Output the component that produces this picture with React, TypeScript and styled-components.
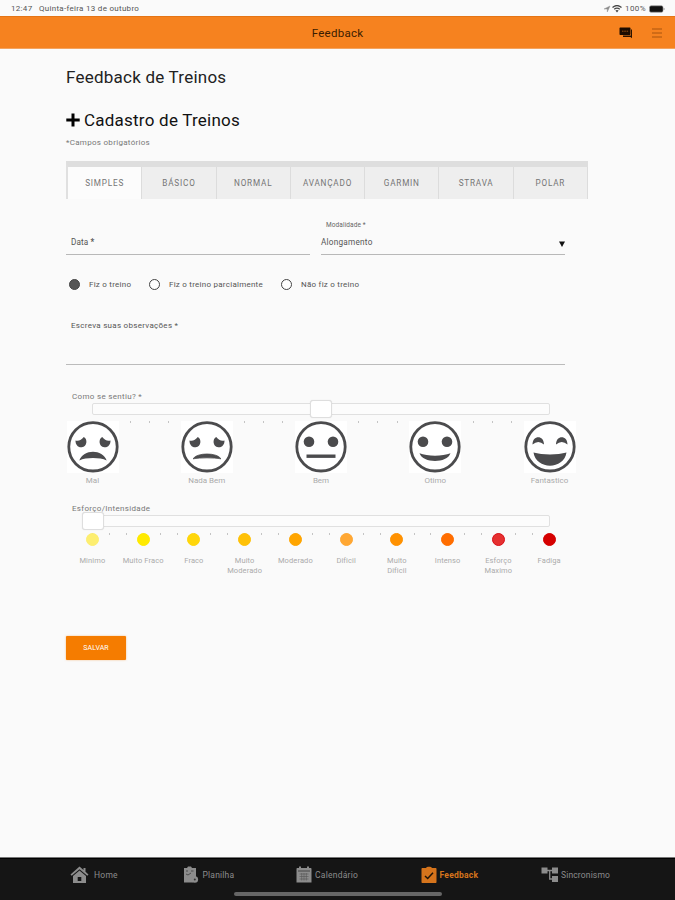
import React, { ReactNode, useState } from "react";
import styled, { createGlobalStyle } from "styled-components";

const GlobalStyle = createGlobalStyle`
  * {
    box-sizing: border-box;
  }
  body {
    margin: 0;
    background: #fafafa;
    font-family: Roboto, "Liberation Sans", sans-serif;
  }
  h1, h2, p {
    margin: 0;
    font-weight: 400;
  }
  button {
    font-family: inherit;
    padding: 0;
    border: 0;
  }
  svg {
    display: block;
    flex: none;
  }
`;

const tabs = ["SIMPLES", "BÁSICO", "NORMAL", "AVANÇADO", "GARMIN", "STRAVA", "POLAR"];

const answers = [
  { label: "Fiz o treino", width: 80 },
  { label: "Fiz o treino parcialmente", width: 132 },
  { label: "Não fiz o treino", width: 90 },
];

const feelings = ["Mal", "Nada Bem", "Bem", "Otimo", "Fantastico"];

const efforts = [
  { label: "Minimo", color: "#fdee70" },
  { label: "Muito Fraco", color: "#ffea00" },
  { label: "Fraco", color: "#ffd60a" },
  { label: "Muito\nModerado", color: "#ffc107" },
  { label: "Moderado", color: "#ffa500" },
  { label: "Dificil", color: "#ffa733" },
  { label: "Muito\nDificil", color: "#ff9100" },
  { label: "Intenso", color: "#ff6d00" },
  { label: "Esforço\nMaximo", color: "#e53030", ring: "#d90d16" },
  { label: "Fadiga", color: "#d50000" },
];

const SadEyes = () => (
  <>
    <path d="M8.500 19.500c3 1 6-.5 8.300-3.500 4 2 3.500 9.500-2 10.300-3.700.500-6.500-2.800-6.300-6.800z" />
    <path d="M43.500 19.500c-3 1-6-.5-8.300-3.500-4 2-3.500 9.500 2 10.300 3.700.500 6.500-2.800 6.300-6.800z" />
  </>
);

const RoundEyes = () => (
  <>
    <circle cx="14" cy="20.700" r="5.300" />
    <circle cx="38" cy="20.700" r="5.300" />
  </>
);

const Face: React.FC<{ mood: number }> = ({ mood }) => (
  <svg width="52" height="52" viewBox="0 0 52 52" fill="#4b4b4d">
    <circle cx="26" cy="25.800" r="24.2" fill="#fff" stroke="#4b4b4d" strokeWidth="2.8" />
    {mood === 0 && (
      <>
        <SadEyes />
        <path d="M12.300 39.500c4-11.800 23.400-11.800 27.400 0-7-3.200-20.400-3.200-27.400 0z" />
      </>
    )}
    {mood === 1 && (
      <>
        <SadEyes />
        <path d="M12 37.800c4-6.400 24-6.400 28 0-8-1.300-20-1.300-28 0z" stroke="#4b4b4d" strokeWidth=".8" />
      </>
    )}
    {mood === 2 && (
      <>
        <RoundEyes />
        <path d="M11.500 33.500h29v3.400h-29z" />
      </>
    )}
    {mood === 3 && (
      <>
        <RoundEyes />
        <path d="M10.500 32.200c8 3.300 23 3.300 31 0-3.500 10.300-27.500 10.300-31 0z" />
      </>
    )}
    {mood === 4 && (
      <>
        <path d="M8.500 23.500c0-9.800 11.500-9.800 11.500 0q-5.700-5-11.500 0z" />
        <path d="M32 23.500c0-9.800 11.500-9.800 11.500 0q-5.700-5-11.500 0z" />
        <path d="M9.500 31.500c9 2.500 24 2.500 33 0-2.500 17.500-30.500 17.500-33 0z" />
      </>
    )}
  </svg>
);

const HomeIcon = () => (
  <svg width="19" height="18" viewBox="0 0 19 18" fill="currentColor">
    <path d="M9.500.5.500 8.500l1.200 1.300 7.800-6.600 7.800 6.600 1.200-1.300-3-2.700V2h-2v2z" />
    <path d="M3 10 9.500 4.400 16 10v7H3z" />
    <path d="M7.700 11h3.600v4H7.700z" fill="#151515" />
  </svg>
);

const SheetIcon = () => (
  <svg width="16" height="18" viewBox="0 0 16 18" fill="currentColor">
    <path d="M1 2h3l1-1.500h3L9 2h4v10l-3 4.500H1z" />
    <path d="M3 5h2M8 5h2.500M3 8l2 1 3-2" fill="none" stroke="#3c3c3c" strokeWidth=".8" />
    <circle cx="11.800" cy="13.500" r="3.300" />
    <circle cx="11.800" cy="13.500" r="1" fill="#333" />
  </svg>
);

const CalendarIcon = () => (
  <svg width="16" height="18" viewBox="0 0 16 18" fill="currentColor">
    <path d="M1.500 2H3V.5h2V2h6V.5h2V2h1.500c.6 0 1 .4 1 1v13.500H.5V3c0-.6.400-1 1-1z" />
    <path d="M2 5h12" stroke="#343434" strokeWidth=".8" />
    <path d="M3.500 8h9M3.500 10.500h9M3.500 13h9M5.700 7v7.500M8 7v7.500M10.300 7v7.500" stroke="#555" strokeWidth=".6" />
  </svg>
);

const CheckIcon = () => (
  <svg width="16" height="18" viewBox="0 0 16 18" fill="currentColor">
    <path d="M1.500 2H5c.500-1.800 5.500-1.800 6 0h3.500c.6 0 1 .4 1 1v13c0 .6-.4 1-1 1h-13c-.6 0-1-.4-1-1V3c0-.6.400-1 1-1z" />
    <path d="m4 10 2.700 2.500L12 6.800" fill="none" stroke="#201508" strokeWidth="1.500" />
  </svg>
);

const TreeIcon = () => (
  <svg width="18" height="18" viewBox="0 0 18 18" fill="currentColor">
    <path d="M.5 1.500h6v6h-6zM11 1.500h6v6h-6zM11 10h6v6h-6z" />
    <path d="M6 4.500h6M8.700 4.500V13H12" fill="none" stroke="currentColor" strokeWidth="1.300" />
  </svg>
);

const navItems = [
  { label: "Home", width: 50, gap: 5, spacing: 0.25, icon: <HomeIcon /> },
  { label: "Planilha", width: 51, gap: 4, spacing: 0.2, icon: <SheetIcon /> },
  { label: "Calendário", width: 62, gap: 3, spacing: 0.25, icon: <CalendarIcon /> },
  { label: "Feedback", width: 58, gap: 3, spacing: 0.25, active: true, icon: <CheckIcon /> },
  { label: "Sincronismo", width: 69, gap: 2, spacing: 0.15, icon: <TreeIcon /> },
];

const Slider: React.FC<{
  label: ReactNode;
  value: number;
  steps: number;
  top: number;
}> = ({ label, value, steps, top }) => (
  <SliderBox $top={top}>
    <SliderLabel>{label}</SliderLabel>
    <Track>
      <Thumb style={{ left: `${value}%` }} />
    </Track>
    <Ticks>
      {Array.from({ length: steps }, (_, i) => (
        <i key={i} />
      ))}
    </Ticks>
  </SliderBox>
);

export default function App() {
  const [tab, setTab] = useState("SIMPLES");
  const [answer, setAnswer] = useState(0);

  return (
    <>
      <GlobalStyle />
      <Page>
        <StatusBar>
          <Clock>12:47</Clock>
          <Today>Quinta-feira 13 de outubro</Today>
          <svg width="8" height="8" viewBox="0 0 8 8">
            <path d="M7 1 4.300 7V4H1z" fill="#888" stroke="#999" strokeWidth=".5" />
          </svg>
          <svg width="12" height="8" viewBox="0 0 12 8">
            <path d="M1.500 2.500q4.500-4 9 0M3.200 4.300q2.800-2.400 5.600 0" fill="none" stroke="#444" strokeWidth="1.200" />
            <path d="m6 7.500-1.600-2q1.600-1.200 3.200 0z" fill="#444" />
          </svg>
          <Percent>100%</Percent>
          <svg width="16" height="8" viewBox="0 0 16 8">
            <rect x=".5" y=".8" width="13.500" height="6.400" rx="1.500" fill="#111" stroke="#999" strokeWidth=".6" />
            <path d="M15 3v2" stroke="#999" />
          </svg>
        </StatusBar>
        <Header>
          <HeaderTitle>Feedback</HeaderTitle>
          <HeaderActions>
            <svg width="14" height="12" viewBox="0 0 14 12">
              <path d="M1.500.5h9c.6 0 1 .4 1 1V7c0 .6-.4 1-1 1H1.500c-.6 0-1-.4-1-1V1.500c0-.6.400-1 1-1z" fill="#1c0c00" />
              <path d="M12 2.500h1v8.800L11.500 10H4V8.500h8z" fill="#2a1300" />
              <path d="M3 4.200h1.500M5.300 4.200h1.500M7.600 4.200h1.500" stroke="#9c5213" />
            </svg>
            <svg width="10" height="10" viewBox="0 0 10 10">
              <path d="M0 1h10M0 5h10M0 9h10" stroke="#a9540f" strokeWidth="1.100" />
            </svg>
          </HeaderActions>
        </Header>

        <Content>
          <Title>Feedback de Treinos</Title>
          <Subtitle>
            <svg width="14" height="14" viewBox="0 0 14 14">
              <path d="M7 .5v13M.3 7h13.400" stroke="#000" strokeWidth="3" />
            </svg>
            <span>Cadastro de Treinos</span>
          </Subtitle>
          <Note>*Campos obrigatórios</Note>

          <Tabs>
            {tabs.map((name) => (
              <Tab key={name} $active={name === tab} onClick={() => setTab(name)}>
                {name}
              </Tab>
            ))}
          </Tabs>

          <Form>
            <Fields>
              <Field>
                <FieldValue $indent={5}>
                  <span>
                    Data <b>*</b>
                  </span>
                </FieldValue>
              </Field>
              <Field>
                <FieldLabel>Modalidade *</FieldLabel>
                <FieldValue>
                  <Selected>Alongamento</Selected>
                  <Arrow width="6" height="6" viewBox="0 0 6 6">
                    <path d="M0 .5h6l-3 5.500z" fill="#111" />
                  </Arrow>
                </FieldValue>
              </Field>
            </Fields>

            <Answers>
              {answers.map((item, i) => (
                <Answer key={item.label} $width={item.width} onClick={() => setAnswer(i)}>
                  <Radio $checked={i === answer} />
                  {item.label}
                </Answer>
              ))}
            </Answers>

            <Notes>Escreva suas observações *</Notes>

            <Slider label="Como se sentiu? *" value={50} steps={25} top={26} />
            <Faces>
              {feelings.map((name, i) => (
                <Feeling key={name}>
                  <Face mood={i} />
                  <span>{name}</span>
                </Feeling>
              ))}
            </Faces>

            <Slider label="Esforço/Intensidade" value={0} steps={28} top={13} />
            <Efforts>
              {efforts.map((item) => (
                <Effort key={item.label}>
                  <Dot $color={item.color} $ring={item.ring} />
                  <span>{item.label}</span>
                </Effort>
              ))}
            </Efforts>

            <Save>SALVAR</Save>
          </Form>
        </Content>

        <BottomNav>
          {navItems.map((item) => (
            <NavItem
              key={item.label}
              $width={item.width}
              $gap={item.gap}
              $spacing={item.spacing}
              $active={item.active}
            >
              {item.icon}
              <span>{item.label}</span>
            </NavItem>
          ))}
          <HomeIndicator />
        </BottomNav>
      </Page>
    </>
  );
}

const Page = styled.div`
  display: flex;
  flex-direction: column;
  width: 675px;
  height: 900px;
  overflow: hidden;
  background: #fafafa;
`;

const StatusBar = styled.div`
  display: flex;
  align-items: center;
  flex: none;
  height: 16px;
  padding: 1px 10px 0 11px;
  font-size: 8px;
  color: #555;
`;

const Clock = styled.span`
  width: 28px;
  letter-spacing: 0.3px;
`;

const Today = styled.span`
  flex: 1;
  letter-spacing: 0.29px;
`;

const Percent = styled.span`
  width: 24px;
  margin-left: 2px;
  letter-spacing: 0.4px;
`;

const Header = styled.header`
  display: grid;
  grid-template-columns: 1fr auto 1fr;
  align-items: center;
  flex: none;
  height: 33px;
  padding-right: 13px;
  background: #f6821f;
  border-top: 1px solid #e57516;
  border-bottom: 1px solid #f3a35f;
`;

const HeaderTitle = styled.span`
  grid-column: 2;
  margin-left: 13px;
  font-size: 11.5px;
  letter-spacing: 0.25px;
  color: #3a1c00;
`;

const HeaderActions = styled.div`
  display: flex;
  align-items: center;
  justify-content: flex-end;
  gap: 19px;
`;

const Content = styled.main`
  flex: 1;
  width: 588px;
  padding: 18px 0 0 66px;
`;

const Title = styled.h1`
  height: 20px;
  font-size: 17px;
  line-height: 20px;
  letter-spacing: 0.23px;
  color: #222;
`;

const Subtitle = styled.h2`
  display: flex;
  align-items: center;
  gap: 4px;
  height: 20px;
  margin-top: 23px;
  font-size: 17px;
  line-height: 20px;
  letter-spacing: 0.23px;
  color: #111;
`;

const Note = styled.p`
  margin-top: 8px;
  height: 10px;
  font-size: 8px;
  line-height: 10px;
  letter-spacing: 0.29px;
  color: #777;
`;

const Tabs = styled.div`
  display: grid;
  grid-template-columns: repeat(7, 1fr);
  height: 38px;
  margin-top: 13px;
  border-top: 6px solid #dedede;
  border-left: 2px solid #e0e0e0;
`;

const Tab = styled.button<{ $active?: boolean }>`
  border-right: 1px solid #dcdcdc;
  background: ${({ $active }) => ($active ? "#fcfcfc" : "#eeeeee")};
  font-size: 8.2px;
  letter-spacing: 0.8px;
  color: #757575;
`;

const Form = styled.div`
  width: 499px;
`;

const Fields = styled.div`
  display: grid;
  grid-template-columns: 1fr 1fr;
  gap: 11px;
  height: 56px;
`;

const Field = styled.div`
  display: flex;
  flex-direction: column;
  justify-content: flex-end;
  border-bottom: 1px solid #b8b8b8;
`;

const FieldLabel = styled.label`
  height: 10px;
  margin: 0 0 6px 5px;
  font-size: 6.5px;
  line-height: 10px;
  letter-spacing: 0.1px;
  color: #666;
`;

const FieldValue = styled.div<{ $indent?: number }>`
  display: flex;
  align-items: center;
  justify-content: space-between;
  height: 12px;
  margin-bottom: 6px;
  padding-left: ${({ $indent = 0 }) => $indent}px;
  font-size: 8.2px;
  letter-spacing: 0.1px;
  color: #555;
`;

const Selected = styled.span`
  letter-spacing: 0.25px;
`;

const Arrow = styled.svg`
  margin-top: 4px;
`;

const Answers = styled.div`
  display: flex;
  height: 12px;
  margin-top: 23px;
  padding-left: 3px;
`;

const Answer = styled.label<{ $width: number }>`
  display: flex;
  align-items: center;
  gap: 9px;
  width: ${({ $width }) => $width}px;
  font-size: 8px;
  letter-spacing: 0.25px;
  color: #555;
  white-space: nowrap;
`;

const Radio = styled.span<{ $checked: boolean }>`
  flex: none;
  width: 11px;
  height: 11px;
  border: 1.5px solid #444;
  border-radius: 50%;
  background: ${({ $checked }) => ($checked ? "#555" : "#fff")};
`;

const Notes = styled.div`
  height: 46px;
  margin-top: 29px;
  padding: 1px 0 0 5px;
  border-bottom: 1px solid #bbb;
  font-size: 8px;
  line-height: 11px;
  letter-spacing: 0.29px;
  color: #555;
`;

const SliderBox = styled.div<{ $top: number }>`
  width: 458px;
  margin: ${({ $top }) => $top}px 0 0 26px;
`;

const SliderLabel = styled.div`
  height: 12px;
  margin-left: -20px;
  font-size: 8px;
  line-height: 12px;
  letter-spacing: 0.32px;
  color: #777;
`;

const Track = styled.div`
  position: relative;
  height: 12px;
  border: 1px solid #e0e0e0;
  border-radius: 2px;
  background: #fcfcfc;
`;

const Thumb = styled.span`
  position: absolute;
  top: -4px;
  width: 22px;
  height: 18px;
  border: 1px solid #dedede;
  border-radius: 3px;
  background: #fff;
  transform: translateX(-50%);
  box-shadow: 0 0 1px rgba(0, 0, 0, 0.15);
`;

const Ticks = styled.div`
  display: flex;
  justify-content: space-between;
  height: 9px;
  padding-top: 6px;

  i {
    width: 1px;
    height: 2px;
    background: #c4c4c4;
  }
`;

const Faces = styled.div`
  display: flex;
  justify-content: space-between;
  width: 509px;
  height: 69px;
  margin: -3px 0 0 0.5px;
`;

const Feeling = styled.div`
  display: flex;
  flex-direction: column;
  align-items: center;
  width: 52px;

  svg {
    position: relative;
    background: #fff;
  }
  span {
    margin-top: 3px;
    font-size: 8px;
    line-height: 10px;
    color: #aaa;
    white-space: nowrap;
  }
`;

const Efforts = styled.div`
  display: grid;
  grid-template-columns: repeat(10, 50.75px);
  width: 508px;
  height: 44px;
  margin: -3px 0 0 1px;
`;

const Effort = styled.div`
  display: flex;
  flex-direction: column;
  align-items: center;

  span {
    margin-top: 10px;
    font-size: 7.5px;
    line-height: 10px;
    letter-spacing: 0.1px;
    text-align: center;
    white-space: pre;
    color: #aaa;
  }
`;

const Dot = styled.i<{ $color: string; $ring?: string }>`
  position: relative;
  flex: none;
  width: 13px;
  height: 13px;
  border: 1.5px solid ${({ $color, $ring }) => $ring || $color};
  border-radius: 50%;
  background: ${({ $color }) => $color};
`;

const Save = styled.button`
  display: block;
  width: 60px;
  height: 24px;
  margin-top: 59px;
  border-radius: 1px;
  background: #f57c00;
  box-shadow: 0 0 2px rgba(245, 124, 0, 0.5);
  font-size: 7px;
  letter-spacing: 0.1px;
  color: #fff;
`;

const BottomNav = styled.nav`
  position: relative;
  display: flex;
  justify-content: space-between;
  flex: none;
  height: 43px;
  padding: 8px 65px 0 70px;
  border-top: 1px solid #777;
  background: #151515;
  box-shadow: inset 0 1px 0 #000;
`;

const NavItem = styled.a<{ $width: number; $gap: number; $spacing: number; $active?: boolean }>`
  display: flex;
  align-items: center;
  gap: ${({ $gap }) => $gap}px;
  width: ${({ $width }) => $width}px;
  height: 18px;
  font-size: 8.5px;
  font-weight: ${({ $active }) => ($active ? 700 : 400)};
  letter-spacing: ${({ $spacing }) => $spacing}px;
  color: ${({ $active }) => ($active ? "#d5741c" : "#8c8c8c")};
  white-space: nowrap;
`;

const HomeIndicator = styled.span`
  position: absolute;
  bottom: 4px;
  left: 234px;
  width: 208px;
  height: 4px;
  border-radius: 2px;
  background: #666;
`;
